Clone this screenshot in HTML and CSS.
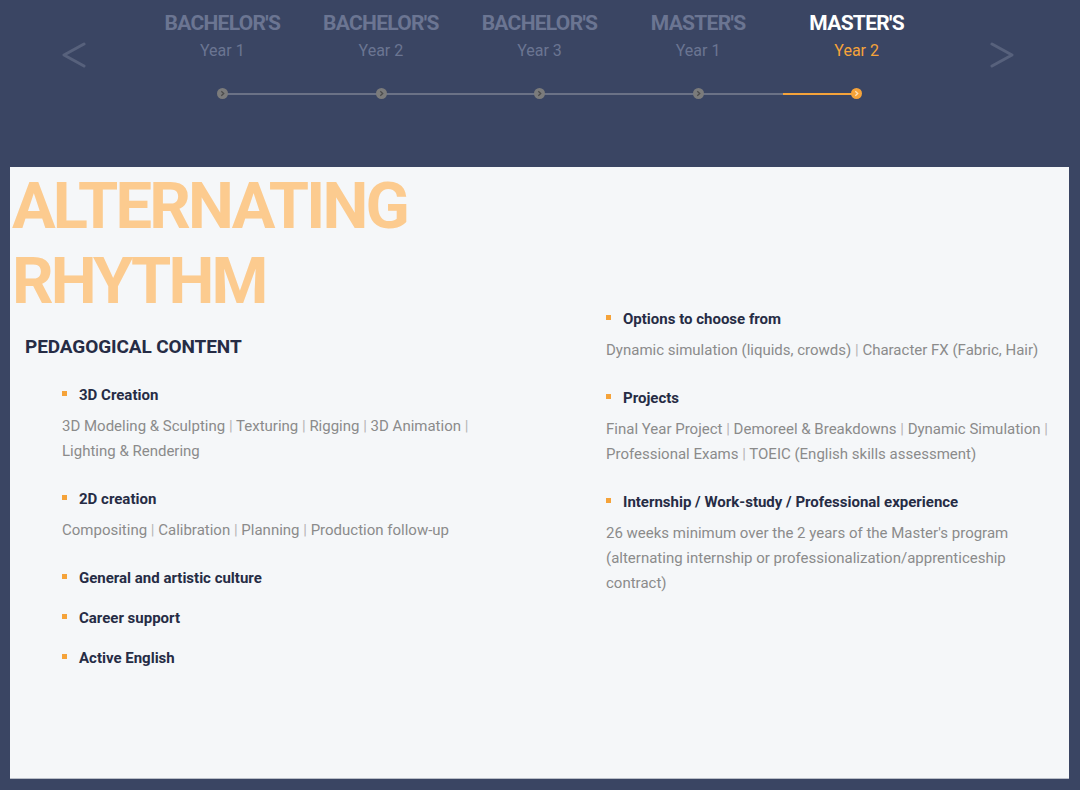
FILE: index.html
```html
<!DOCTYPE html>
<html lang="en">
<head>
    <meta charset="UTF-8">
    <meta name="viewport" content="width=device-width, initial-scale=1.0">
    <title>Alternating rhythm</title>
    <link rel="stylesheet" href="styles.css">
</head>
<body>
    <div class="header">
        <div class="arrow prev">
            <svg width="26" height="26" viewBox="0 0 26 26"><path d="M23 2 L3 13 L23 24" fill="none" stroke="#57617c" stroke-width="3" stroke-linecap="round" stroke-linejoin="round"/></svg>
        </div>
        <div class="steps">
            <div class="step">
                <p class="degree">BACHELOR'S</p>
                <p class="year">Year 1</p>
            </div>
            <div class="step">
                <p class="degree">BACHELOR'S</p>
                <p class="year">Year 2</p>
            </div>
            <div class="step">
                <p class="degree">BACHELOR'S</p>
                <p class="year">Year 3</p>
            </div>
            <div class="step">
                <p class="degree">MASTER'S</p>
                <p class="year">Year 1</p>
            </div>
            <div class="step active">
                <p class="degree">MASTER'S</p>
                <p class="year">Year 2</p>
            </div>
            <div class="track">
                <div class="track-done"></div>
                <span class="dot"><svg width="11" height="11" viewBox="0 0 11 11"><circle cx="5.5" cy="5.5" r="5.5" fill="#7b7b7b"/><path d="M4.3 3.3 L6.7 5.5 L4.3 7.7" fill="none" stroke="#4c4c4c" stroke-width="1.3"/></svg></span>
                <span class="dot"><svg width="11" height="11" viewBox="0 0 11 11"><circle cx="5.5" cy="5.5" r="5.5" fill="#7b7b7b"/><path d="M4.3 3.3 L6.7 5.5 L4.3 7.7" fill="none" stroke="#4c4c4c" stroke-width="1.3"/></svg></span>
                <span class="dot"><svg width="11" height="11" viewBox="0 0 11 11"><circle cx="5.5" cy="5.5" r="5.5" fill="#7b7b7b"/><path d="M4.3 3.3 L6.7 5.5 L4.3 7.7" fill="none" stroke="#4c4c4c" stroke-width="1.3"/></svg></span>
                <span class="dot"><svg width="11" height="11" viewBox="0 0 11 11"><circle cx="5.5" cy="5.5" r="5.5" fill="#7b7b7b"/><path d="M4.3 3.3 L6.7 5.5 L4.3 7.7" fill="none" stroke="#4c4c4c" stroke-width="1.3"/></svg></span>
                <span class="dot"><svg width="11" height="11" viewBox="0 0 11 11"><circle cx="5.5" cy="5.5" r="5.5" fill="#f5a33a"/><path d="M4.3 3.3 L6.7 5.5 L4.3 7.7" fill="none" stroke="#fde0b8" stroke-width="1.3"/></svg></span>
            </div>
        </div>
        <div class="arrow next">
            <svg width="26" height="26" viewBox="0 0 26 26"><path d="M3 2 L23 13 L3 24" fill="none" stroke="#57617c" stroke-width="3" stroke-linecap="round" stroke-linejoin="round"/></svg>
        </div>
    </div>

    <div class="panel">
        <div class="col-left">
            <h1 class="big-title">ALTERNATING<br>RHYTHM</h1>
            <h2 class="section-title">PEDAGOGICAL CONTENT</h2>
            <ul class="items">
                <li>
                    <p class="item-title">3D Creation</p>
                    <p class="item-text">3D Modeling &amp; Sculpting <span class="sep">|</span> Texturing <span class="sep">|</span> Rigging <span class="sep">|</span> 3D Animation <span class="sep">|</span> Lighting &amp; Rendering</p>
                </li>
                <li>
                    <p class="item-title">2D creation</p>
                    <p class="item-text">Compositing <span class="sep">|</span> Calibration <span class="sep">|</span> Planning <span class="sep">|</span> Production follow-up</p>
                </li>
                <li><p class="item-title">General and artistic culture</p></li>
                <li><p class="item-title">Career support</p></li>
                <li><p class="item-title">Active English</p></li>
            </ul>
        </div>
        <div class="col-right">
            <ul class="items">
                <li>
                    <p class="item-title">Options to choose from</p>
                    <p class="item-text">Dynamic simulation (liquids, crowds) <span class="sep">|</span> Character FX (Fabric, Hair)</p>
                </li>
                <li>
                    <p class="item-title">Projects</p>
                    <p class="item-text">Final Year Project <span class="sep">|</span> Demoreel &amp; Breakdowns <span class="sep">|</span> Dynamic Simulation <span class="sep">|</span> Professional Exams <span class="sep">|</span> TOEIC (English skills assessment)</p>
                </li>
                <li>
                    <p class="item-title">Internship / Work-study / Professional experience</p>
                    <p class="item-text">26 weeks minimum over the 2 years of the Master's program (alternating internship or professionalization/apprenticeship contract)</p>
                </li>
            </ul>
        </div>
    </div>
</body>
</html>
```

FILE: styles.css
```css
body {
    margin: 0;
    background-color: #3a4563;
    font-family: Roboto, "Noto Sans", sans-serif;
    height: 790px;
    overflow: hidden;
}

p, h1, h2, ul {
    margin: 0;
    padding: 0;
}

.header {
    display: flex;
    align-items: flex-start;
    height: 167px;
    padding-left: 61px;
}

.arrow {
    width: 26px;
    padding-top: 42px;
}

.prev {
    margin-right: 56px;
}

.next {
    margin-left: 53px;
}

.steps {
    position: relative;
    display: flex;
    width: 793px;
    padding-top: 11px;
}

.step {
    width: 158.6px;
    text-align: center;
}

.degree {
    font-size: 21px;
    font-weight: 700;
    letter-spacing: -0.7px;
    color: #6b7592;
    line-height: 24px;
}

.year {
    font-size: 16px;
    color: #6b7592;
    line-height: 20px;
    margin-top: 6px;
}

.active .degree {
    color: #ffffff;
}

.active .year {
    color: #f5a33a;
}

.track {
    position: absolute;
    left: 74px;
    right: 74px;
    top: 88px;
    height: 11px;
    display: flex;
    justify-content: space-between;
    align-items: center;
}

.track::before {
    content: "";
    position: absolute;
    left: 5px;
    right: 5px;
    top: 5px;
    height: 2px;
    background-color: #6b7286;
}

.track-done {
    position: absolute;
    right: 5px;
    top: 5px;
    width: 74px;
    height: 2px;
    background-color: #f5a33a;
    z-index: 1;
}

.dot {
    position: relative;
    z-index: 2;
    width: 11px;
    height: 11px;
    display: block;
}

.dot svg {
    display: block;
}

.panel {
    display: flex;
    margin: 0 11px 0 10px;
    height: 611px;
    background-color: #f5f7f9;
    border-bottom: 1px solid #b9bec8;
}

.col-left {
    width: 582px;
    padding-left: 2px;
}

.col-right {
    flex: 1;
    padding-top: 140px;
}

.big-title {
    font-size: 65px;
    font-weight: 700;
    letter-spacing: -2.8px;
    line-height: 75px;
    color: #fccb8f;
    padding-top: 2px;
}

.section-title {
    font-size: 19px;
    font-weight: 700;
    color: #262c45;
    margin: 16px 0 0 13px;
    letter-spacing: -0.1px;
}

.items {
    list-style: none;
}

.col-left .items {
    padding: 25px 0 0 50px;
    width: 430px;
}

.items li {
    position: relative;
    padding-left: 17px;
    margin-bottom: 16px;
}

.items li::before {
    content: "";
    position: absolute;
    left: 0;
    top: 8px;
    width: 5px;
    height: 5px;
    background-color: #f5a33a;
}

.item-title {
    font-size: 15px;
    font-weight: 700;
    color: #262c45;
    line-height: 24px;
}

.item-text {
    margin-left: -17px;
    margin-top: 7px;
    font-size: 15px;
    color: #8b8b8b;
    line-height: 25px;
    margin-bottom: 23px;
}

.sep {
    color: #b5b5b5;
}

.col-right .items {
    padding-left: 12px;
    width: 452px;
}
```
